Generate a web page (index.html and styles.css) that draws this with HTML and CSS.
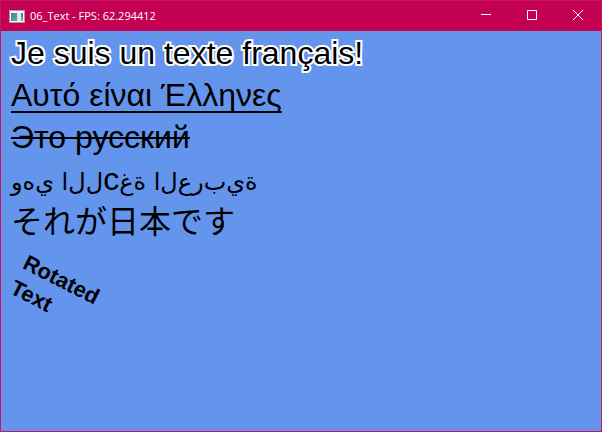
FILE: index.html
```
<!DOCTYPE html>
<html lang="en">
<head>
<meta charset="utf-8">
<meta name="viewport" content="width=device-width, initial-scale=1">
<title>06_Text</title>
<link rel="stylesheet" href="styles.css">
</head>
<body>
<div class="window">
  <header class="titlebar">
    <svg class="app-icon" width="16" height="13" viewBox="0 0 16 13" aria-hidden="true">
      <defs>
        <linearGradient id="pane" x1="0" y1="0" x2="1" y2="1">
          <stop offset="0" stop-color="#4a78b8"/>
          <stop offset="1" stop-color="#55b586"/>
        </linearGradient>
      </defs>
      <rect width="16" height="13" fill="#a9a3a9"/>
      <rect x="1" y="1" width="14" height="11" fill="#f4f4f4"/>
      <rect x="2" y="3" width="6" height="8" fill="url(#pane)"/>
      <rect x="8" y="3" width="3" height="8" fill="#e2e5e8"/>
      <rect x="12" y="3" width="2" height="4" fill="#4f83a5"/>
      <rect x="12" y="7" width="2" height="4" fill="#6aa88e"/>
    </svg>
    <h1 class="title">06_Text - FPS: 62.294412</h1>
    <div class="controls">
      <button class="control" type="button" aria-label="Minimize"><svg width="10" height="10" viewBox="0 0 10 10"><path d="M0 4.500H10"/></svg></button>
      <button class="control" type="button" aria-label="Maximize"><svg width="10" height="10" viewBox="0 0 10 10"><path d="M.5 .5H9.500V9.500H.5Z"/></svg></button>
      <button class="control" type="button" aria-label="Close"><svg width="10" height="10" viewBox="0 0 10 10"><path d="M0 0L10 10M10 0L0 10"/></svg></button>
    </div>
  </header>
  <main class="canvas">
    <p class="line outlined" lang="fr">Je suis un texte français!</p>
    <p class="line underlined" lang="el"><span>Αυτό είναι Έλληνες</span></p>
    <p class="line struck" lang="ru"><span>Это русский</span></p>
    <p class="line arabic" lang="ar" dir="ltr">و&zwnj;ه&zwnj;ي ا&zwnj;ل&zwnj;ل&zwnj;<span class="latin">c</span>&zwnj;غ&zwnj;ة ا&zwnj;ل&zwnj;ع&zwnj;ر&zwnj;ب&zwnj;ي&zwnj;ة</p>
    <p class="line japanese" lang="ja">それが日本です</p>
    <p class="rotated">Rotated<br>Text</p>
  </main>
</div>
</body>
</html>
```
FILE: styles.css
```
* {
  box-sizing: border-box;
}

body {
  margin: 0;
  font-family: "Liberation Sans", sans-serif;
}

.window {
  display: flex;
  flex-direction: column;
  min-height: 100vh;
  border: 1px solid #c9145f;
  background: #6495ed;
  overflow: hidden;
}

.titlebar {
  display: flex;
  align-items: center;
  height: 30px;
  padding-left: 8px;
  background: #c30052;
  color: #fff;
}

.title {
  margin: 0 0 0 5px;
  font: 400 11px/16px "Open Sans", sans-serif;
}

.controls {
  display: flex;
  align-self: stretch;
  margin-left: auto;
}

.control {
  display: grid;
  place-items: center;
  width: 46px;
  padding: 0 0 2px;
  border: 0;
  background: none;
}

.control svg {
  fill: none;
  stroke: #fff;
}

.canvas {
  flex: 1;
  padding: 1px 10px;
}

.line {
  margin: 0;
  height: 42px;
  font-size: 32px;
  line-height: 42px;
  white-space: nowrap;
  color: #000;
}

.outlined {
  -webkit-text-stroke: 4px #fff;
  paint-order: stroke fill;
}

.underlined span {
  text-decoration: underline;
  text-decoration-thickness: 2px;
  text-decoration-skip-ink: none;
  text-underline-offset: 5px;
}

.struck span {
  text-decoration: line-through;
  text-decoration-thickness: 2px;
}

.arabic {
  font-family: "DejaVu Sans", sans-serif;
  font-size: 24px;
  direction: ltr;
  unicode-bidi: bidi-override;
}

.latin {
  font-family: "Liberation Sans", sans-serif;
  font-size: 32px;
}

.japanese {
  font-family: "Noto Sans CJK JP", sans-serif;
  line-height: 38px;
}

.rotated {
  width: max-content;
  margin: 7px 0 0 20px;
  font-size: 22px;
  font-weight: 700;
  line-height: 28px;
  transform: rotate(27deg);
  transform-origin: 0 0;
}
```
